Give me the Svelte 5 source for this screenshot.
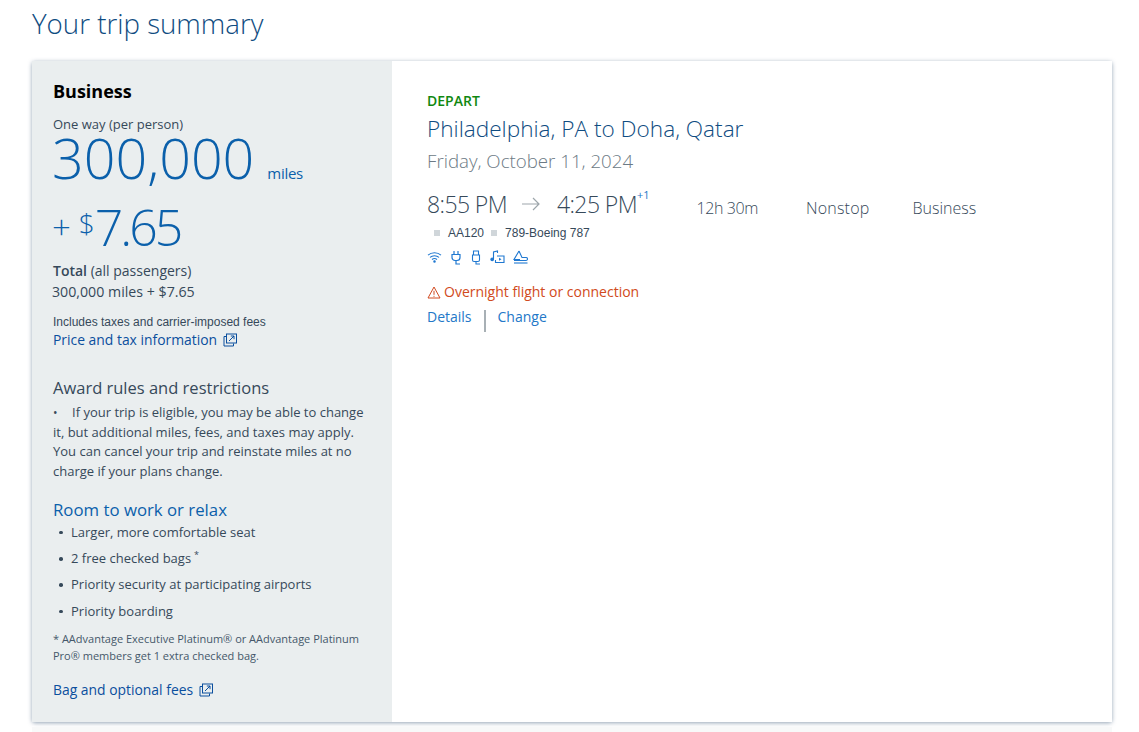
<script lang="ts">
	const perks = ['Larger, more comfortable seat', '2 free checked bags', 'Priority security at participating airports', 'Priority boarding'];
</script>

{#snippet external()}
	<svg class="ext" viewBox="0 0 14 14" width="14" height="14" fill="none" stroke="currentColor" stroke-width="1">
		<path d="M3.5 3.5H1v9.5h9.5V10.500" />
		<rect x="3.500" y="1" width="10" height="9" />
		<path d="M6 8l5-5M7.800 3H11v3.200" />
	</svg>
{/snippet}

<div class="page">
	<h1>Your trip summary</h1>
	<div class="card">
		<aside class="side">
			<h2>Business</h2>
			<div class="oneway">One way (per person)</div>
			<div class="miles"><span class="big">300,000</span><span class="unit">miles</span></div>
			<div class="fee"><span class="plus">+</span><span class="dollar">$</span><span class="amount">7.65</span></div>
			<div class="total"><b>Total</b> (all passengers)</div>
			<div class="totalval">300,000 miles + $7.65</div>
			<div class="incl">Includes taxes and carrier-imposed fees</div>
			<a class="link" href="#price">Price and tax information {@render external()}</a>

			<h3>Award rules and restrictions</h3>
			<p class="rules"><span class="dot">•</span>If your trip is eligible, you may be able to change it, but additional miles, fees, and taxes may apply. You can cancel your trip and reinstate miles at no charge if your plans change.</p>

			<h3 class="room">Room to work or relax</h3>
			<ul>
				{#each perks as perk, i}
					<li>{perk}{#if i === 1}<sup>*</sup>{/if}</li>
				{/each}
			</ul>
			<p class="note">* AAdvantage Executive Platinum® or AAdvantage Platinum Pro® members get 1 extra checked bag.</p>
			<a class="link bag" href="#bag">Bag and optional fees {@render external()}</a>
		</aside>

		<main class="detail">
			<div class="depart">DEPART</div>
			<div class="route">Philadelphia, PA to Doha, Qatar</div>
			<div class="date">Friday, October 11, 2024</div>
			<div class="times">
				<span class="time">8:55 PM</span>
				<svg class="arrow" viewBox="0 0 20 14" width="20" height="14" fill="none" stroke="#9da6ab" stroke-width="1.200">
					<path d="M1 7h17M12 1l6 6-6 6" />
				</svg>
				<span class="time">4:25 PM</span><sup class="plusone">+1</sup>
				<span class="meta dur">12h 30m</span>
				<span class="meta stop">Nonstop</span>
				<span class="meta biz">Business</span>
			</div>
			<div class="flight">
				<i></i><span>AA120</span><i></i><span>789-Boeing 787</span>
			</div>
			<div class="amenities">
				<svg viewBox="0 0 15 12" width="15" height="12" fill="none" stroke="currentColor" stroke-width="1.100">
					<path d="M1 4.200c3.600-3.200 9.400-3.200 13 0M3 6.400c2.500-2.200 6.500-2.200 9 0M5 8.500c1.400-1.100 3.600-1.100 5 0" />
					<circle cx="7.500" cy="10.400" r=".7" fill="currentColor" />
				</svg>
				<svg viewBox="0 0 12 15" width="12" height="15" fill="none" stroke="currentColor" stroke-width="1.200">
					<path d="M4 1v3.500M8 1v3.500M2 4.500h8v3a3 3 0 0 1-3 3H5a3 3 0 0 1-3-3zM6 10.500V14h4" />
				</svg>
				<svg viewBox="0 0 12 15" width="12" height="15" fill="none" stroke="currentColor" stroke-width="1.100">
					<path d="M3.500 1h5v4h-5zM2.500 5h7v5a1.500 1.500 0 0 1-1.500 1.500H4A1.500 1.500 0 0 1 2.500 10zM6 11.500V14h4" />
				</svg>
				<svg viewBox="0 0 15 14" width="15" height="14" fill="none" stroke="currentColor" stroke-width="1.100">
					<path d="M3.500 9V2l4-1v2" />
					<circle cx="2.200" cy="9.300" r="1.300" fill="currentColor" />
					<path d="M7 6h7v6.500H5.500V10" />
					<path d="M9 7.800l2.500 1.500L9 10.800z" fill="currentColor" stroke="none" />
				</svg>
				<svg viewBox="0 0 15 14" width="15" height="14" fill="none" stroke="currentColor" stroke-width="1.100">
					<path d="M6 1L1 9.500h6" />
					<path d="M6 1l3 6.500h4a1.500 1.500 0 0 1 0 3H1" />
					<path d="M1 13h13.500" />
				</svg>
			</div>
			<div class="warn">
				<svg viewBox="0 0 14 13" width="14" height="13" fill="none" stroke="currentColor" stroke-width="1">
					<path d="M7 1l6 11H1zM7 4.800v4M7 9.800v1" />
				</svg>
				Overnight flight or connection
			</div>
			<div class="actions">
				<a href="#details">Details</a>
				<span class="sep"></span>
				<a href="#change">Change</a>
			</div>
		</main>
	</div>
	<div class="below"></div>
</div>

<style>
	:global(body) {
		margin: 0;
		background: #fff;
		font-family: 'Open Sans', 'Noto Sans', sans-serif;
		color: #36495a;
	}
	.page {
		height: 732px;
		overflow: hidden;
		padding: 0 27px 0 32px;
		box-sizing: border-box;
	}
	h1 {
		margin: 0;
		height: 61px;
		padding-top: 5px;
		box-sizing: border-box;
		font-size: 27.700px;
		line-height: 36px;
		font-weight: 300;
		color: #0f4c81;
	}
	.card {
		display: flex;
		height: 661px;
		border-radius: 3px;
		box-shadow: 0 1px 4px rgba(60, 90, 120, 0.55);
	}
	.below {
		height: 10px;
		margin-top: 5px;
		background: #f8f9f9;
	}
	.side {
		width: 360px;
		flex: none;
		box-sizing: border-box;
		padding: 18px 20px 0 21px;
		background: #eaeeef;
		font-size: 13px;
	}
	h2 {
		margin: 0;
		font-size: 18px;
		line-height: 25px;
		font-weight: 700;
		color: #000;
	}
	.oneway {
		margin-top: 11px;
		line-height: 18px;
		font-size: 13px;
	}
	.miles {
		display: flex;
		align-items: baseline;
		color: #0b60ab;
		height: 50px;
	}
	.big {
		font-size: 55.600px;
		line-height: 50px;
		font-weight: 300;
		margin-left: -1px;
	}
	.unit {
		margin-left: 13px;
		font-size: 15px;
		letter-spacing: -0.3px;
	}
	.fee {
		display: flex;
		align-items: baseline;
		height: 62px;
		margin-top: 13px;
		color: #0b60ab;
		font-weight: 300;
	}
	.plus {
		font-size: 33px;
		line-height: 62px;
		margin: 0 8px 0 -1px;
		position: relative;
		top: -7px;
	}
	.dollar {
		font-size: 28px;
		position: relative;
		top: -12px;
	}
	.amount {
		font-size: 50px;
		letter-spacing: -3px;
		line-height: 62px;
	}
	.total {
		margin-top: 3px;
		font-size: 14px;
		line-height: 20px;
	}
	.total b {
		font-weight: 600;
	}
	.totalval {
		font-size: 14.200px;
		line-height: 20px;
		margin: 1px 0 0 -1px;
	}
	.incl {
		margin-top: 12px;
		font-family: 'Liberation Sans', sans-serif;
		font-size: 12px;
		line-height: 16px;
	}
	.link {
		display: block;
		color: #0b4f9e;
		font-size: 13.900px;
		line-height: 20px;
		text-decoration: none;
	}
	.ext {
		vertical-align: -2px;
		margin-left: 2px;
	}
	h3 {
		margin: 27px 0 0;
		font-size: 16.500px;
		line-height: 22px;
		font-weight: 400;
	}
	.rules {
		margin: 4px 0 0;
		font-size: 13px;
		line-height: 19.700px;
	}
	.dot {
		display: inline-block;
		width: 19px;
		font-size: 12px;
	}
	h3.room {
		margin-top: 17px;
		font-size: 16.800px;
		color: #0b60ab;
	}
	ul {
		list-style: none;
		margin: 1px 0 0;
		padding: 0;
	}
	li {
		position: relative;
		padding-left: 18px;
		height: 26.300px;
		line-height: 20px;
		font-size: 13px;
	}
	li::before {
		content: '';
		position: absolute;
		left: 6px;
		top: 9px;
		width: 3.500px;
		height: 3.500px;
		border-radius: 50%;
		background: #36495a;
	}
	sup {
		font-size: 9px;
		line-height: 0;
		margin-left: 3px;
	}
	.note {
		margin: 3px 0 0;
		font-size: 11px;
		line-height: 17px;
		color: #45586a;
	}
	.bag {
		margin-top: 16px;
	}
	.detail {
		flex: 1;
		background: #fff;
		padding: 30px 0 0 35px;
	}
	.depart {
		font-size: 14px;
		line-height: 20px;
		font-weight: 600;
		color: #108810;
	}
	.route {
		margin-top: 3px;
		font-size: 22.600px;
		line-height: 30px;
		color: #0f4c81;
		font-weight: 300;
	}
	.date {
		margin-top: 2px;
		font-size: 18.700px;
		line-height: 30px;
		font-weight: 300;
		color: #6c7a85;
	}
	.times {
		display: flex;
		align-items: baseline;
		margin-top: 13px;
		height: 30px;
	}
	.time {
		font-size: 23px;
		line-height: 30px;
		font-weight: 300;
		letter-spacing: -0.6px;
	}
	.arrow {
		margin: 0 16px 0 14px;
		align-self: center;
	}
	.plusone {
		font-size: 11px;
		color: #2378c8;
		align-self: flex-start;
		line-height: 12px;
		margin: 0;
	}
	.meta {
		font-size: 16px;
		font-weight: 300;
		position: relative;
		top: 1px;
		color: #36495a;
	}
	.dur {
		margin-left: 47px;
		letter-spacing: -0.4px;
	}
	.stop {
		margin-left: 48px;
		letter-spacing: 0.2px;
	}
	.biz {
		margin-left: 43px;
	}
	.flight {
		display: flex;
		align-items: center;
		margin-top: 5px;
		height: 18px;
		font-family: 'Liberation Sans', sans-serif;
		font-size: 12px;
		padding-left: 7px;
	}
	.flight i {
		width: 6px;
		height: 6px;
		background: #d0d6da;
		margin-right: 8px;
	}
	.flight span {
		margin-right: 7px;
	}
	.amenities {
		display: flex;
		align-items: center;
		gap: 8px;
		height: 16px;
		margin-top: 7px;
		color: #1f78d1;
	}
	.warn {
		margin-top: 17px;
		display: flex;
		align-items: center;
		gap: 3px;
		font-size: 14px;
		line-height: 20px;
		color: #d14a20;
	}
	.actions {
		display: flex;
		align-items: flex-start;
		margin-top: 1px;
		font-size: 14px;
		line-height: 22px;
	}
	.actions a {
		margin-top: 3px;
		color: #2378c8;
		text-decoration: none;
	}
	.sep {
		width: 2px;
		height: 22px;
		background: #a8b0b5;
		margin: 7px 12px 0;
	}
</style>
